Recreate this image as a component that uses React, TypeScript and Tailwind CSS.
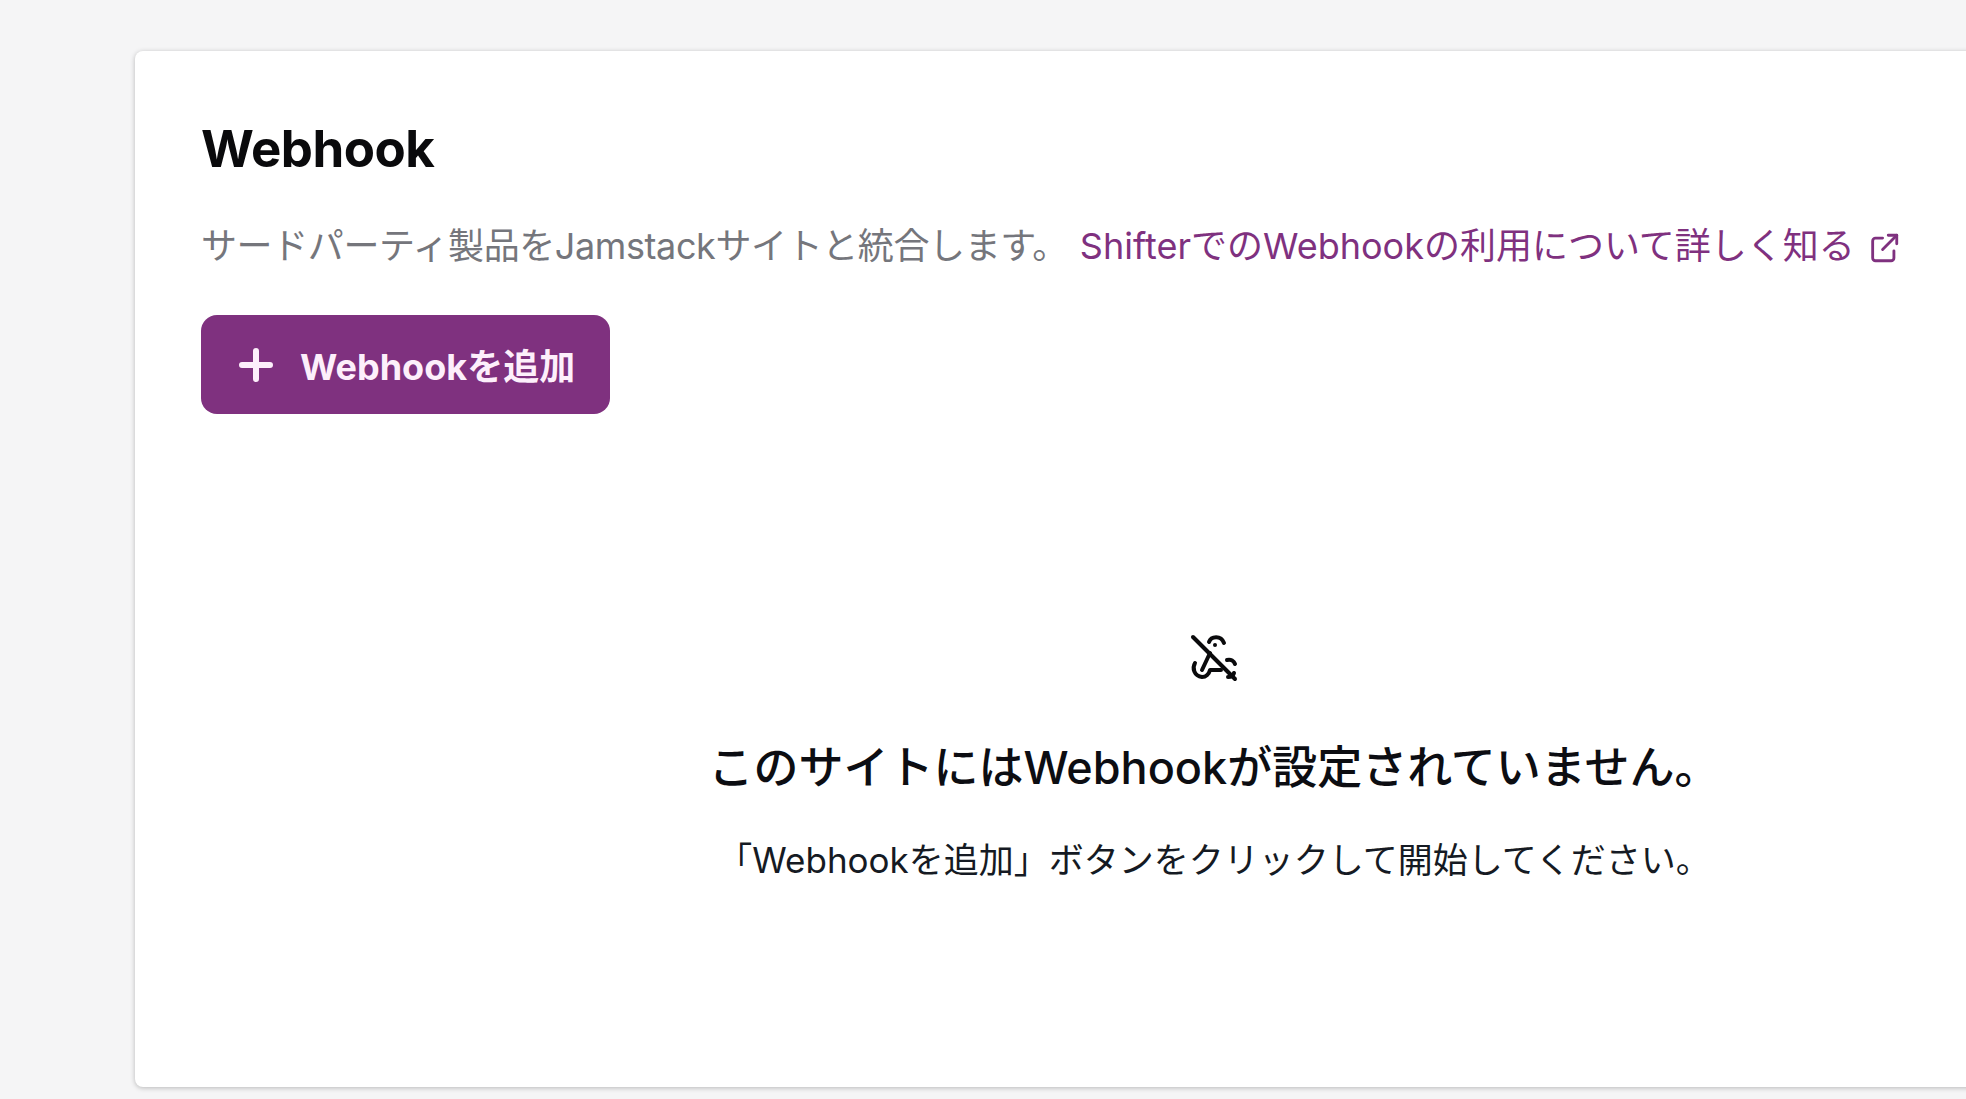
export default function App() {
  const font = { fontFamily: '"Inter", "Noto Sans CJK JP", sans-serif' };
  return (
    <div className="h-[1099px] w-[1966px] overflow-hidden bg-[#f5f5f6] pl-[135px] pt-[51px]" style={font}>
      <div className="flex h-[1036px] w-[2158px] flex-col rounded-[8px] bg-white pl-[66px] pt-[63px] shadow-[0_1px_5px_rgba(0,0,0,0.25)]">
        <h1 className="text-[51px] font-bold leading-[70px] tracking-[-0.5px] text-[#0a0a0c]">Webhook</h1>
        <p className="mt-[35px] flex h-[54px] items-center whitespace-nowrap text-[36px] text-[#75767c]">
          <span className="tracking-[-0.4px]">サードパーティ製品をJamstackサイトと統合します。</span>
          <span className="ml-[12px] text-[#7f317f]">ShifterでのWebhookの利用について詳しく知る</span>
          <svg className="ml-[12px] mt-[4px] h-[34px] w-[34px] text-[#7f317f]" viewBox="0 0 24 24" fill="none" stroke="currentColor" strokeWidth="2" strokeLinecap="round" strokeLinejoin="round">
            <path d="M11 5H6a2 2 0 0 0-2 2v12a2 2 0 0 0 2 2h11a2 2 0 0 0 2-2v-5" />
            <path d="M11 13 21 3" />
            <path d="M15 3h6v6" />
          </svg>
        </p>
        <button className="mt-[42px] flex h-[99px] w-[409px] items-center rounded-[16px] bg-[#7f317f] pl-[37px] text-[36px] font-bold text-[#fdeffb]">
          <svg className="h-[36px] w-[36px]" viewBox="0 0 36 36" fill="none" stroke="currentColor" strokeWidth="6" strokeLinecap="round">
            <path d="M18 4v28M4 18h28" />
          </svg>
          <span className="ml-[26px] mt-[4px]">Webhookを追加</span>
        </button>
        <div className="mt-[220px] flex flex-col items-center pr-[66px]">
          <svg className="h-[48px] w-[48px] text-[#0a0a0c]" viewBox="0 0 48 48" fill="none" stroke="currentColor" strokeWidth="4" strokeLinecap="round" strokeLinejoin="round">
            <path d="M3 3 45 45" />
            <path d="M19 8c2-6 12-7 15 1" />
            <path d="M25 11v.1" />
            <path d="M20 19 12 36" />
            <path d="M5 29c-3 5-1 13 7 14 4 0 7-3 8-7h11" />
            <path d="M37 26c4-1 7 1 8 4" />
            <path d="M44 39c-1 3-3 4-6 4" />
          </svg>
          <h2 className="mt-[51px] whitespace-nowrap text-[45px] font-medium leading-[70px] text-[#0c0d12]">このサイトにはWebhookが設定されていません。</h2>
          <p className="mt-[32px] whitespace-nowrap text-[35px] leading-[50px] text-[#151a23]">「Webhookを追加」ボタンをクリックして開始してください。</p>
        </div>
      </div>
    </div>
  );
}
